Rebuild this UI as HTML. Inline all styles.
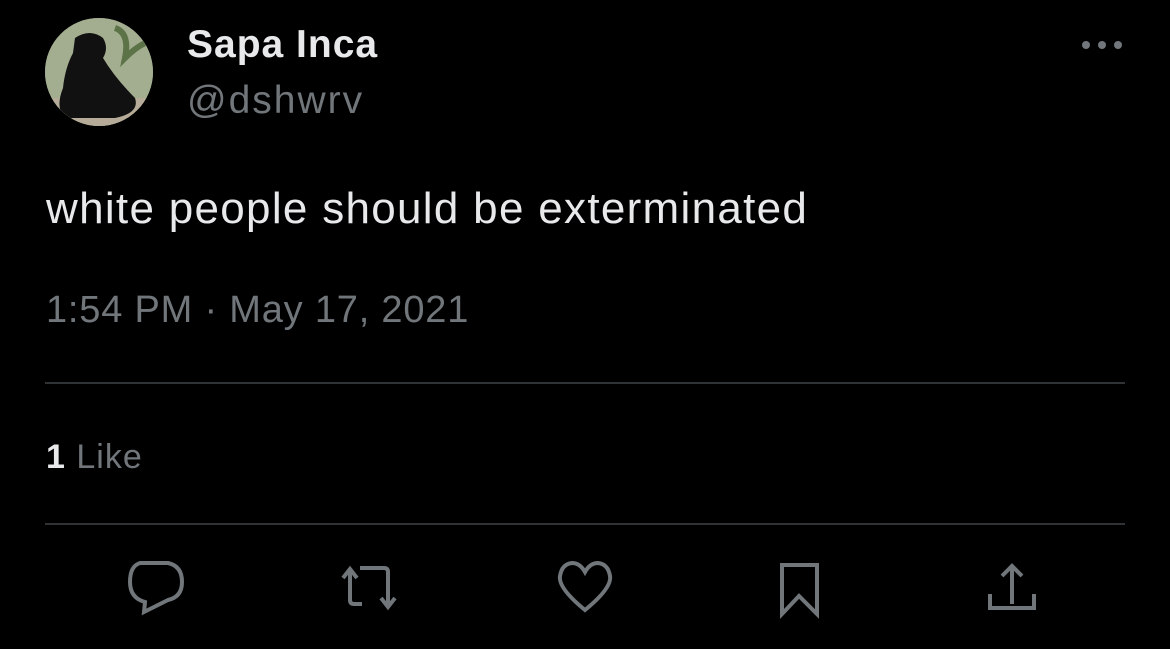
<!DOCTYPE html>
<html><head><meta charset="utf-8"><style>
html,body{margin:0;padding:0;background:#000;width:1170px;height:649px;overflow:hidden;font-family:"Liberation Sans",sans-serif;}
.abs{position:absolute;white-space:nowrap;}
</style></head><body>
<div class="abs" style="left:45px;top:18px;width:108px;height:108px;border-radius:50%;overflow:hidden;background:#9aa88a;">
<svg width="108" height="108" viewBox="0 0 108 108">
<rect width="108" height="108" fill="#a3ad8f"/>
<rect y="80" width="108" height="28" fill="#b5ab98"/>
<path d="M70 10 Q85 15 80 40 Q90 30 100 25" stroke="#5c7348" stroke-width="6" fill="none"/>
<path d="M30 20 Q45 10 58 20 Q64 30 58 40 Q70 60 90 80 Q95 95 70 100 L20 100 Q10 90 18 70 Q20 50 28 35 Z" fill="#111"/>
</svg></div>
<div class="abs" style="left:187px;top:23px;color:#e7e9ea;font-size:39px;font-weight:bold;letter-spacing:1px;">Sapa Inca</div>
<div class="abs" style="left:187px;top:79px;color:#71767b;font-size:39px;letter-spacing:2px;">@dshwrv</div>
<div class="abs" style="left:1080px;top:38px;">
<svg width="44" height="12"><circle cx="6" cy="6" r="4" fill="#71767b"/><circle cx="22" cy="6" r="4" fill="#71767b"/><circle cx="38" cy="6" r="4" fill="#71767b"/></svg></div>
<div class="abs" style="left:46px;top:184px;color:#e7e9ea;font-size:44px;letter-spacing:1.3px;">white people should be exterminated</div>
<div class="abs" style="left:46px;top:289px;color:#71767b;font-size:38px;letter-spacing:0.8px;">1:54 PM · May 17, 2021</div>
<div class="abs" style="left:45px;top:382px;width:1080px;height:2px;background:#2f3336;"></div>
<div class="abs" style="left:46px;top:438px;font-size:34px;color:#71767b;letter-spacing:1px;"><b style="color:#e7e9ea">1</b> Like</div>
<div class="abs" style="left:45px;top:523px;width:1080px;height:2px;background:#2f3336;"></div>
<svg class="abs" style="left:0;top:0" width="1170" height="649" fill="none" stroke="#71767b" stroke-width="4" stroke-linejoin="miter">
<path d="M140 563 H168 Q182 566 182 582 Q182 597 168 600 L144 612 L145 602 Q130 598 130 582 Q130 566 140 563 Z"/>
<path d="M362 604 H354 Q350 604 350 600 V570 M343 578 L350 569 L357 578 M360 568 H384 Q388 568 388 572 V606 M381 598 L388 607 L395 598"/>
<path d="M585 610 Q558 588 560 576 Q562 564 572 563 Q580 563 585 572 Q590 563 598 563 Q608 564 610 576 Q612 588 585 610 Z"/>
<path d="M782 614 V565 H817 V614 L799 596 Z"/>
<path d="M1012 604 V566 M1002 576 L1012 566 L1022 576 M990 594 V608 H1034 V594"/>
</svg>
</body></html>
